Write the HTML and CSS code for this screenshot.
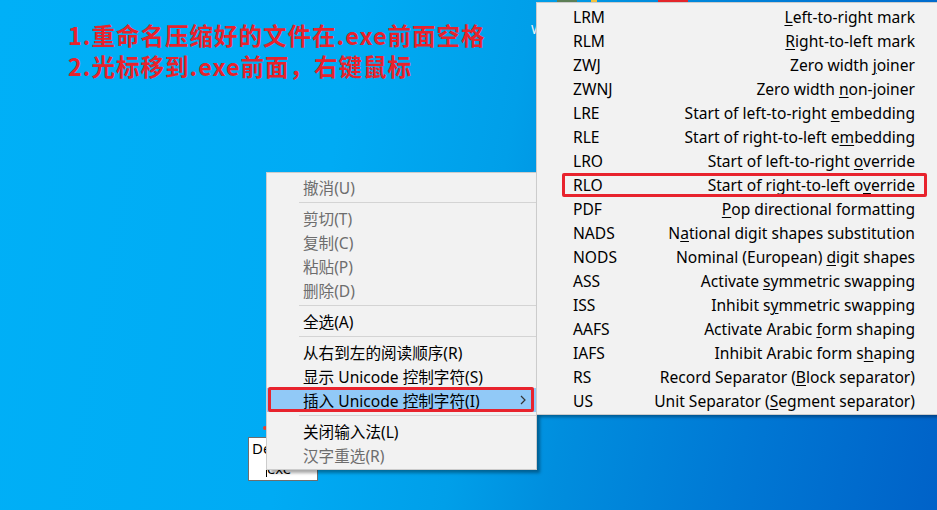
FILE: index.html
```html
<!DOCTYPE html>
<html lang="zh-CN">
<head>
<meta charset="utf-8">
<title>Unicode 控制字符</title>
<link rel="stylesheet" href="styles.css">
</head>
<body>
<div class="desktop">
  <div class="caption">
    <p>1.重命名压缩好的文件在.exe前面空格</p>
    <p>2.光标移到.exe前面，右键鼠标</p>
  </div>

  <div class="peek peek-green"></div>
  <div class="peek peek-yellow"></div>
  <div class="peek peek-red"></div>
  <span class="peek-label">W</span>

  <div class="filebox">
    <span class="fb-line1">De</span>
    <span class="fb-line2"><i class="caret"></i>exe</span>
  </div>
  <span class="reddot"></span>

  <div class="menu ctx">
    <div class="item dis">撤消(U)</div>
    <div class="sep"></div>
    <div class="item dis">剪切(T)</div>
    <div class="item dis">复制(C)</div>
    <div class="item dis">粘贴(P)</div>
    <div class="item dis">删除(D)</div>
    <div class="sep"></div>
    <div class="item">全选(A)</div>
    <div class="sep"></div>
    <div class="item">从右到左的阅读顺序(R)</div>
    <div class="item">显示 Unicode 控制字符(S)</div>
    <div class="item hot mark">插入 Unicode 控制字符(I)
      <svg class="chev" width="6" height="10" viewBox="0 0 6 10"><polyline points="1,1 5,5 1,9" fill="none" stroke="#333" stroke-width="1.2"/></svg>
    </div>
    <div class="sep"></div>
    <div class="item">关闭输入法(L)</div>
    <div class="item dis">汉字重选(R)</div>
  </div>

  <div class="menu sub">
    <div class="srow"><span>LRM</span><span><u>L</u>eft-to-right mark</span></div>
    <div class="srow"><span>RLM</span><span><u>R</u>ight-to-left mark</span></div>
    <div class="srow"><span>ZWJ</span><span>Zero width <u>j</u>oiner</span></div>
    <div class="srow"><span>ZWNJ</span><span>Zero width <u>n</u>on-joiner</span></div>
    <div class="srow"><span>LRE</span><span>Start of left-to-right <u>e</u>mbedding</span></div>
    <div class="srow"><span>RLE</span><span>Start of right-to-left e<u>m</u>bedding</span></div>
    <div class="srow"><span>LRO</span><span>Start of left-to-right <u>o</u>verride</span></div>
    <div class="srow mark2"><span>RLO</span><span>Start of right-to-left o<u>v</u>erride</span></div>
    <div class="srow"><span>PDF</span><span><u>P</u>op directional formatting</span></div>
    <div class="srow"><span>NADS</span><span>N<u>a</u>tional digit shapes substitution</span></div>
    <div class="srow"><span>NODS</span><span>Nominal (European) <u>d</u>igit shapes</span></div>
    <div class="srow"><span>ASS</span><span>Activate <u>s</u>ymmetric swapping</span></div>
    <div class="srow"><span>ISS</span><span>Inhibit s<u>y</u>mmetric swapping</span></div>
    <div class="srow"><span>AAFS</span><span>Activate Arabic <u>f</u>orm shaping</span></div>
    <div class="srow"><span>IAFS</span><span>Inhibit Arabic form s<u>h</u>aping</span></div>
    <div class="srow"><span>RS</span><span>Record Separator (<u>B</u>lock separator)</span></div>
    <div class="srow"><span>US</span><span>Unit Separator (<u>S</u>egment separator)</span></div>
  </div>
</div>
</body>
</html>
```

FILE: styles.css
```css
html, body {
  margin: 0;
  padding: 0;
}
body {
  width: 937px;
  height: 510px;
  overflow: hidden;
}
.desktop {
  position: relative;
  width: 937px;
  height: 510px;
  overflow: hidden;
  background: linear-gradient(100deg, #00b0f7 0%, #00abf4 35%, #009fe9 52%, #008ede 62%, #0078d4 80%, #0062c8 100%);
  font-family: "Noto Sans", "Noto Sans CJK SC", sans-serif;
}
.caption {
  padding: 20px 0 0 68px;
  color: #e8222c;
  font-family: "Noto Sans CJK SC", sans-serif;
  font-weight: 700;
  font-size: 23.5px;
  letter-spacing: 1px;
  line-height: 31px;
}
.caption p {
  margin: 0;
}

.peek {
  position: absolute;
  top: 0;
  height: 4px;
}
.peek-green { left: 557px; width: 20px; background: #5d7f56; }
.peek-yellow { left: 591px; width: 6px; background: #f2c23c; }
.peek-red { left: 658px; width: 30px; background: #e3262b; }
.peek-label {
  position: absolute;
  left: 531px;
  top: 20px;
  color: #f4f4f4;
  font-size: 13px;
  font-family: "Noto Sans", sans-serif;
}

.filebox {
  position: absolute;
  left: 248px;
  top: 437px;
  width: 68px;
  height: 42px;
  background: #fff;
  border: 1px solid #6e6e6e;
  font-size: 15px;
  line-height: 20px;
  color: #000;
}
.fb-line1 {
  display: block;
  padding-left: 3px;
}
.fb-line2 {
  display: block;
  padding-left: 17px;
}
.caret {
  display: inline-block;
  width: 1px;
  height: 15px;
  background: #000;
  vertical-align: -3px;
}
.reddot {
  position: absolute;
  left: 263px;
  top: 426px;
  width: 4px;
  height: 4px;
  border-radius: 50%;
  background: #e8402c;
}

.menu {
  position: absolute;
  box-sizing: border-box;
  background: #f2f2f2;
  border: 1px solid #cccccc;
  color: #000;
}
.ctx {
  left: 266px;
  top: 172px;
  width: 271px;
  padding: 2px 0 2px 0;
  box-shadow: 4px 4px 3px -1px rgba(0, 0, 0, 0.35);
  font-family: "Noto Sans", "Noto Sans CJK SC", sans-serif;
  font-size: 15.6px;
}
.item {
  position: relative;
  display: flex;
  align-items: center;
  height: 24px;
  padding-left: 36px;
  white-space: nowrap;
}
.item.dis {
  color: #6d6d6d;
}
.sep {
  height: 7px;
  margin-left: 32px;
  position: relative;
}
.sep::after {
  content: "";
  position: absolute;
  left: 0;
  right: 0;
  top: 3px;
  height: 1px;
  background: #d4d4d4;
}
.item.hot {
  background: #91c9f7;
}
.chev {
  position: absolute;
  right: 10px;
  top: 7px;
}
.mark::before {
  content: "";
  position: absolute;
  left: 1px;
  right: 2px;
  top: -1px;
  bottom: 0;
  border: 3px solid #e8232d;
  border-radius: 2px;
}

.sub {
  left: 536px;
  top: 2px;
  width: 410px;
  padding: 2px 0 1px 0;
  box-shadow: 2px 3px 3px -1px rgba(0, 0, 0, 0.35);
  font-size: 15.6px;
}
.srow {
  position: relative;
  display: flex;
  justify-content: space-between;
  align-items: center;
  height: 24px;
  padding: 0 30px 0 36px;
  white-space: nowrap;
}
.srow u {
  text-decoration-thickness: 1px;
  text-underline-offset: 2px;
}
.mark2::before {
  content: "";
  position: absolute;
  left: 25px;
  right: 18px;
  top: 0;
  bottom: 0;
  border: 3px solid #e8232d;
  border-radius: 2px;
}
```
